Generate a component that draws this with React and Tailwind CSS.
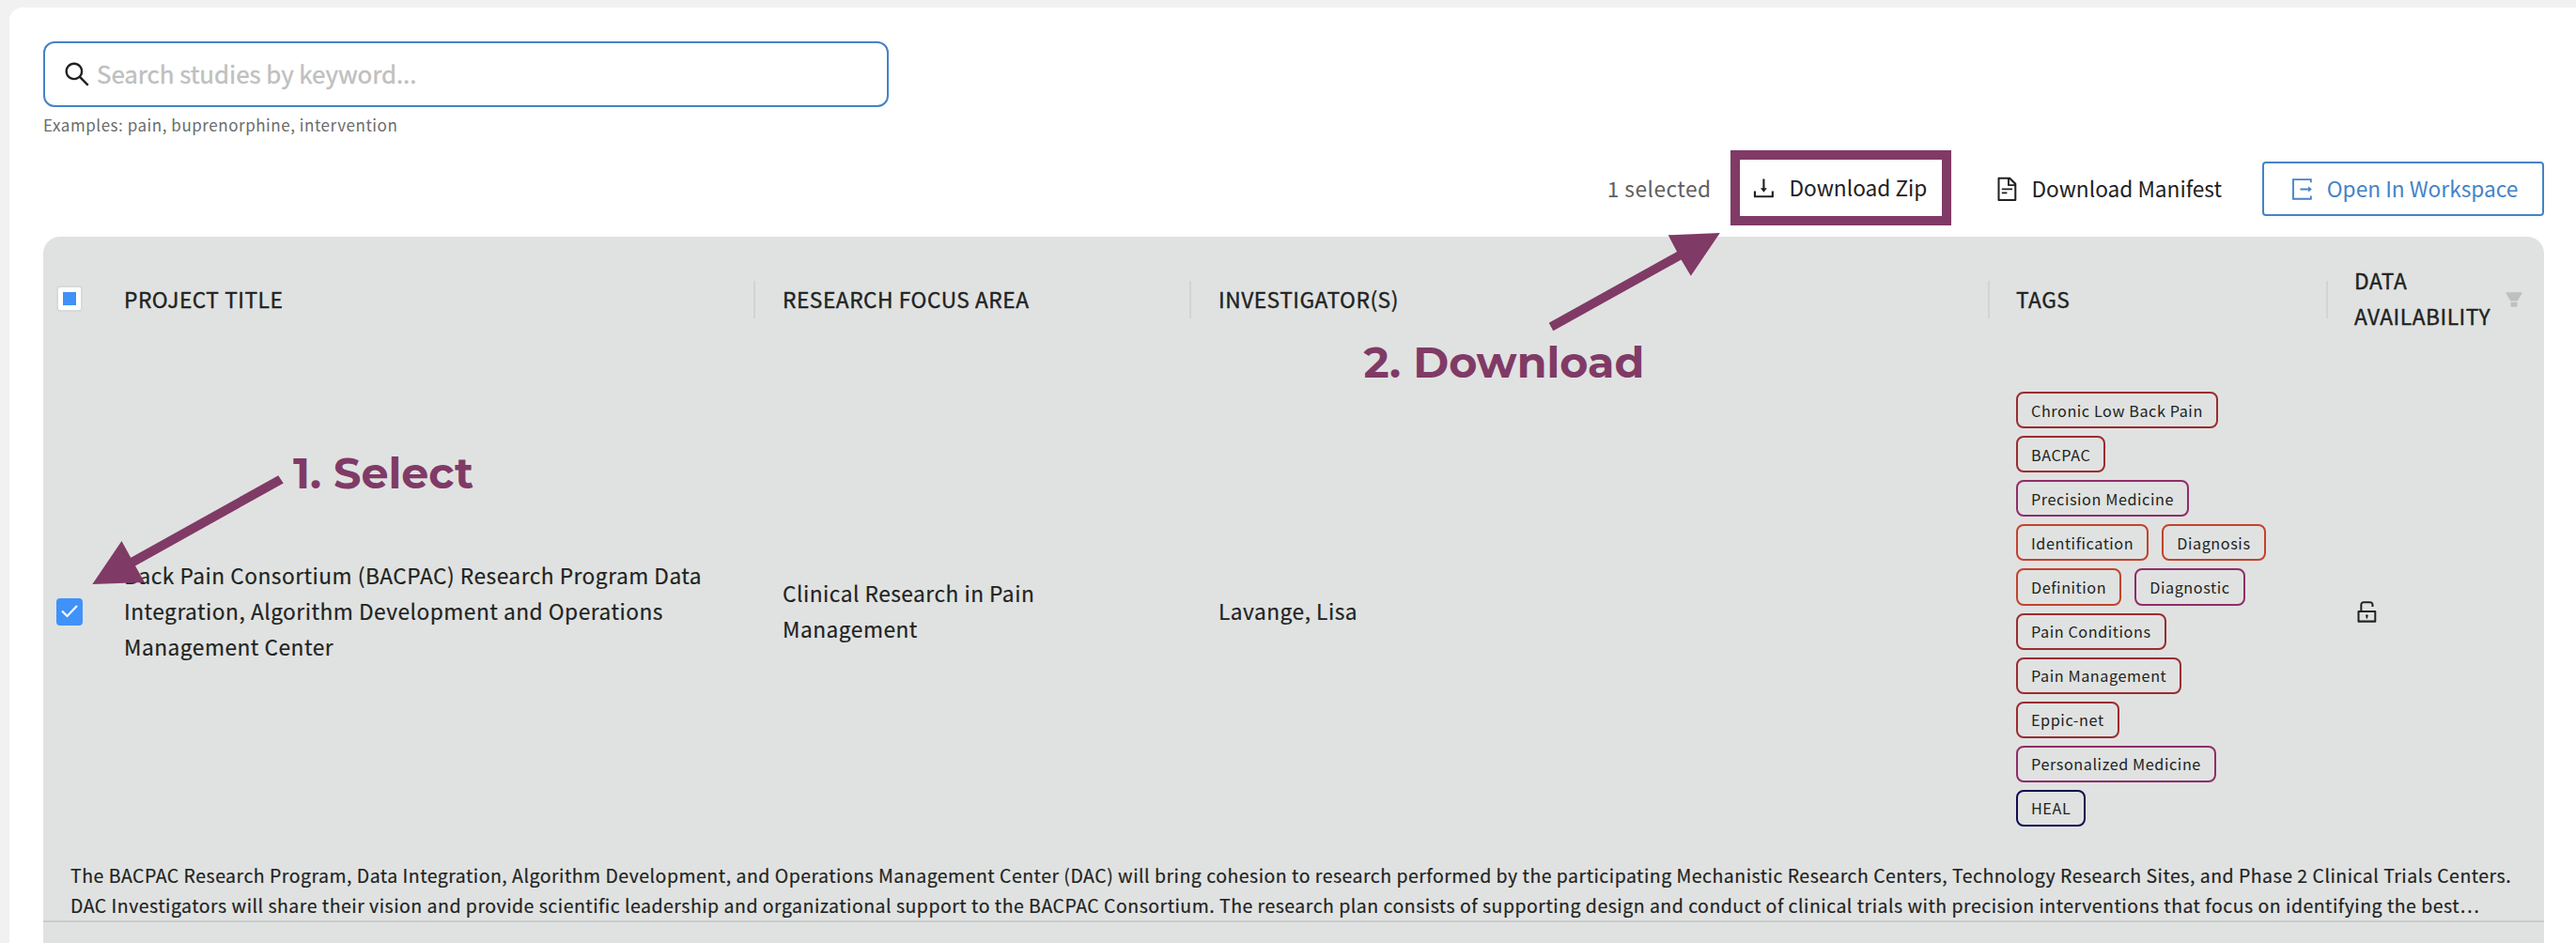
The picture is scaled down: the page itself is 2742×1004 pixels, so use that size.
import React from "react";
import {
  AiOutlineSearch,
  AiOutlineDownload,
  AiOutlineFileText,
  AiFillFilter,
  AiOutlineUnlock,
} from "react-icons/ai";

const TAGS = [
  ["Chronic Low Back Pain", "border-[#9a2c31]"],
  ["BACPAC", "border-[#9a2c31]"],
  ["Precision Medicine", "border-[#8f2d69]"],
  ["Identification", "border-[#c2432d]"],
  ["Diagnosis", "border-[#c2432d]"],
  ["Definition", "border-[#c2432d]"],
  ["Diagnostic", "border-[#8f2d69]"],
  ["Pain Conditions", "border-[#9a2c31]"],
  ["Pain Management", "border-[#9a2c31]"],
  ["Eppic-net", "border-[#9a2c31]"],
  ["Personalized Medicine", "border-[#8f2d69]"],
  ["HEAL", "border-[#110b4f]"],
];

const COLUMNS = "grid grid-cols-[57px_701px_464px_850px_360px_230px]";

function ExportIcon() {
  return (
    <svg viewBox="0 0 1024 1024" className="size-[28.8px] shrink-0" fill="currentColor">
      <path d="M864 112H144v800h736V765h-66v77H210V182h604v77h66V112Z" />
      <path d="M884 512 750 402v74H440v72h310v74Z" />
    </svg>
  );
}

function HeaderCell({ children, pad = "pl-[29px]" }) {
  return (
    <div className={`flex items-center justify-between ${pad}`}>
      <span>{children}</span>
      <span className="h-10 w-0.5 bg-[#d2d4d3]" />
    </div>
  );
}

function SearchBar() {
  return (
    <div>
      <div className="flex h-[70px] w-[900px] items-center rounded-[12px] border-2 border-[#4583c6] bg-white pl-[18px]">
        <AiOutlineSearch className="size-8 text-[#212121]" />
        <span className="pb-[3px] pl-[5px] text-[25.9px] leading-9 tracking-[-0.04px] text-[#bfbfbf] [-webkit-text-stroke:0.4px]">
          Search studies by keyword...
        </span>
      </div>
      <div className="mt-1 text-[17px] leading-[29px] tracking-[0.54px] text-[#6b6b6b]">
        Examples: pain, buprenorphine, intervention
      </div>
    </div>
  );
}

function Toolbar() {
  return (
    <div className="mt-[25px] flex h-[58px] items-center justify-end text-[22.68px] leading-9 text-[#212121]">
      <span className="mr-5 tracking-[0.5px] text-[#606060]">1 selected</span>
      <div className="-mt-[13px] -mb-[11px] flex h-20 w-[235px] items-center border-10 border-[#803a66] pl-[11px]">
        <AiOutlineDownload className="size-[28.8px]" />
        <span className="pl-[13px]">Download Zip</span>
      </div>
      <div className="ml-[45px] flex items-center">
        <AiOutlineFileText className="size-[28.8px]" />
        <span className="pl-3">Download Manifest</span>
      </div>
      <div className="ml-[43px] flex h-[58px] w-[300px] items-center rounded-[4px] border-2 border-[#4583c6] pl-[26px] text-[#4583c6] shadow-[0_3px_0_rgba(0,0,0,0.015)]">
        <ExportIcon />
        <span className="pl-3">Open In Workspace</span>
      </div>
    </div>
  );
}

function TableHeader() {
  return (
    <div
      className={`${COLUMNS} h-[133px] items-center text-[22.68px] leading-[37.8px] tracking-[0.55px] [-webkit-text-stroke:0.4px]`}
    >
      <div className="flex items-center pb-0.5 pl-3.5">
        <span className="flex size-7 items-center justify-center rounded-[4px] border-2 border-[#d9d9d9] bg-white">
          <span className="size-3.5 bg-[#3f92f9]" />
        </span>
      </div>
      <HeaderCell>PROJECT TITLE</HeaderCell>
      <HeaderCell>RESEARCH FOCUS AREA</HeaderCell>
      <HeaderCell>INVESTIGATOR(S)</HeaderCell>
      <HeaderCell pad="pl-7">TAGS</HeaderCell>
      <div className="flex items-center justify-between pr-[21px] pl-7">
        <span className="pb-0.5">
          DATA
          <br />
          AVAILABILITY
        </span>
        <AiFillFilter className="size-[22px] text-[#bfbfbf]" />
      </div>
    </div>
  );
}

function StudyRow() {
  return (
    <div
      className={`${COLUMNS} h-[530px] items-center pt-0.5 text-[22.68px] leading-[37.8px] tracking-[0.52px] [-webkit-text-stroke:0.2px]`}
    >
      <div className="pl-3.5">
        <span className="flex h-[29px] w-7 items-center justify-center rounded-[4px] bg-[#3f92f9]">
          <svg viewBox="0 0 18 14" className="h-3.5 w-[18px]" fill="none" stroke="white" strokeWidth="2.2">
            <path d="M1 6.5 6.5 12 17 1" />
          </svg>
        </span>
      </div>
      <div className="pl-[29px]">
        Back Pain Consortium (BACPAC) Research Program Data
        <br />
        Integration, Algorithm Development and Operations
        <br />
        Management Center
      </div>
      <div className="pl-[29px]">
        Clinical Research in Pain
        <br />
        Management
      </div>
      <div className="pl-[29px]">Lavange, Lisa</div>
      <div className="flex flex-wrap gap-y-2 pr-7 pb-[5px] pl-7 [-webkit-text-stroke:0]">
        {TAGS.map(([name, border]) => (
          <span
            key={name}
            className={`mr-3.5 flex h-[39.1px] items-center rounded-[8px] border-2 px-3.5 text-[16.2px] leading-9 tracking-[0.58px] ${border}`}
          >
            {name}
          </span>
        ))}
      </div>
      <div className="pl-[27px]">
        <AiOutlineUnlock className="size-[28.8px]" />
      </div>
    </div>
  );
}

function Annotations() {
  return (
    <div className="pointer-events-none absolute inset-0 font-['Montserrat','Inter',sans-serif] text-[46px] leading-14 font-bold text-[#803a66]">
      <svg className="absolute inset-0 h-full w-full" viewBox="0 0 2742 1004" fill="currentColor">
        <path d="M98.3 622 129.5 576 139.2 593.7 296.2 506.3 301.7 514.5 144 602.5 153.9 620Z" />
        <path d="M1830.8 248 1775.7 250.3 1785 268 1648.7 343.7 1653.3 352.3 1789.5 276.5 1799.8 293.7Z" />
      </svg>
      <span className="absolute top-[476px] left-[312px] whitespace-nowrap">1. Select</span>
      <span className="absolute top-[358px] left-[1451.5px] whitespace-nowrap">2. Download</span>
    </div>
  );
}

export default function App() {
  return (
    <div className="relative h-[1004px] w-[2742px] overflow-hidden bg-[#f1f1f1] pt-2 pl-2.5 font-['Noto_Sans_CJK_SC','Noto_Sans',sans-serif] text-[#212322]">
      <div className="h-full rounded-tl-[14px] bg-white pt-9 pr-[34px] pl-9">
        <SearchBar />
        <Toolbar />
        <div className="mt-[22px] h-[760px] rounded-t-[18px] bg-[#e0e2e1]">
          <TableHeader />
          <StudyRow />
          <div className="h-[67px] border-b-2 border-[#cacccb] pt-px pl-[29px] text-[19.44px] leading-[32.4px] tracking-[0.517px] whitespace-nowrap [-webkit-text-stroke:0.2px]">
            The BACPAC Research Program, Data Integration, Algorithm Development, and Operations Management Center (DAC) will bring cohesion to research performed by the participating Mechanistic Research Centers, Technology Research Sites, and Phase 2 Clinical Trials Centers.
            <br />
            DAC Investigators will share their vision and provide scientific leadership and organizational support to the BACPAC Consortium. The research plan consists of supporting design and conduct of clinical trials with precision interventions that focus on identifying the best…
          </div>
        </div>
      </div>
      <Annotations />
    </div>
  );
}
